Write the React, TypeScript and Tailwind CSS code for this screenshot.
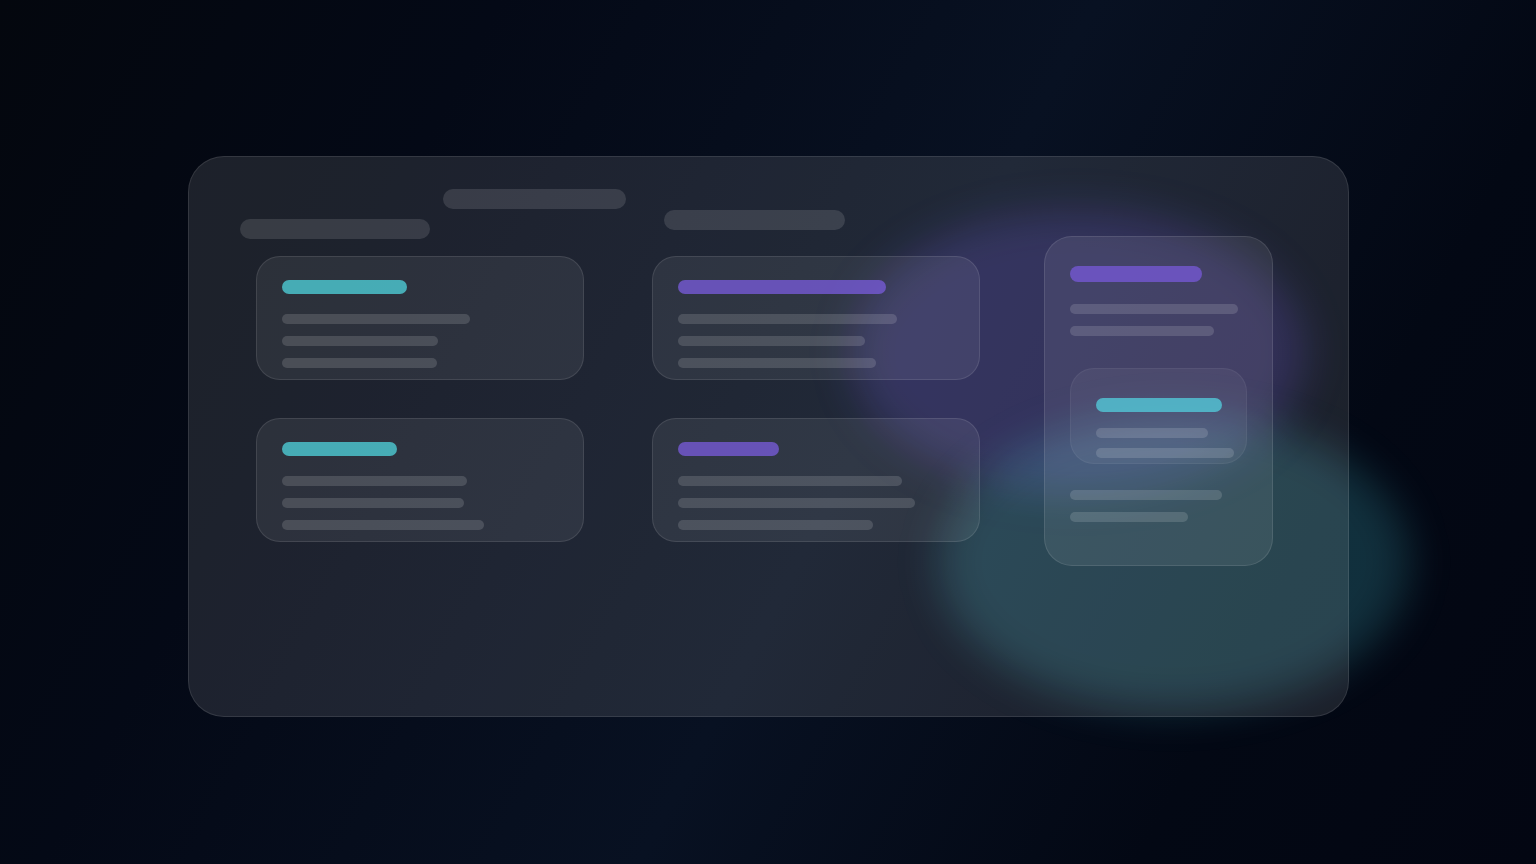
import React from "react";

const chips = ["mt-[30px] w-[190px]", "ml-[13px] w-[183px]", "ml-[38px] mt-[21px] w-[181px]"];

const cards = [
  {
    title: "w-[125px] bg-[#4dccd4]/80",
    lines: ["w-[188px]", "w-[156px]", "w-[155px]"],
  },
  {
    title: "w-[208px] bg-[#765ad4]/80",
    lines: ["w-[219px]", "w-[187px]", "w-[198px]"],
  },
  {
    title: "w-[115px] bg-[#4dccd4]/80",
    lines: ["w-[185px]", "w-[182px]", "w-[202px]"],
  },
  {
    title: "w-[101px] bg-[#765ad4]/80",
    lines: ["w-[224px]", "w-[237px]", "w-[195px]"],
  },
];

const Line = ({ width }: { width: string }) => (
  <div className={`h-[10px] max-w-full rounded-full bg-white/14 ${width}`} />
);

const Card = ({ title, lines }: { title: string; lines: string[] }) => (
  <div className="rounded-3xl border border-white/10 bg-white/7 px-[25px] pt-[23px] pb-[11px]">
    <div className={`h-[14px] max-w-full rounded-full ${title}`} />
    <div className="mt-5 flex flex-col gap-3">
      {lines.map((width, index) => (
        <Line key={index} width={width} />
      ))}
    </div>
  </div>
);

const Sidebar = () => (
  <aside className="mt-[79px] w-[229px] shrink-0 self-start rounded-[28px] border border-white/10 bg-white/8 px-[25px] pt-[29px] pb-[43px]">
    <div className="h-4 w-[132px] rounded-full bg-[#7457d2]/80" />
    <div className="mt-[22px] flex flex-col gap-3">
      <Line width="w-[168px]" />
      <Line width="w-[144px]" />
    </div>
    <div className="mt-8 rounded-3xl border border-white/5 bg-white/5 pt-[29px] pr-3 pb-[5px] pl-[25px]">
      <div className="h-[14px] w-[126px] rounded-full bg-[#52c8d8]/80" />
      <div className="mt-4 flex flex-col gap-[10px]">
        <Line width="w-[112px]" />
        <Line width="w-[138px]" />
      </div>
    </div>
    <div className="mt-[26px] flex flex-col gap-3">
      <Line width="w-[152px]" />
      <Line width="w-[118px]" />
    </div>
  </aside>
);

const App = () => {
  return (
    <main className="flex min-h-screen items-center justify-center overflow-hidden bg-[linear-gradient(118deg,#04070e_0%,#040916_25%,#081122_55%,#030814_80%,#030612_100%)] pt-2">
      <div className="relative w-full max-w-[1161px]">
        {/* glows behind the glass */}
        <div className="absolute top-[54px] right-[44px] h-[284px] w-[454px] rounded-[50%] bg-[#7654ff]/20 blur-[20px]" />
        <div className="absolute right-[-60px] bottom-[7px] h-[296px] w-[470px] rounded-[50%] bg-[#4dd0e1]/20 blur-[20px]" />

        <div className="relative flex min-h-[561px] gap-16 rounded-[36px] border border-white/10 bg-white/10 pr-[75px] pl-[51px]">
          <section className="flex-1 pt-8">
            <div className="flex h-[50px] items-start">
              {chips.map((chip, index) => (
                <div key={index} className={`h-5 rounded-full bg-white/12 ${chip}`} />
              ))}
            </div>
            <div className="mt-[17px] ml-4 grid grid-cols-2 gap-x-[68px] gap-y-[38px]">
              {cards.map((card, index) => (
                <Card key={index} title={card.title} lines={card.lines} />
              ))}
            </div>
          </section>
          <Sidebar />
        </div>
      </div>
    </main>
  );
};

export default App;
